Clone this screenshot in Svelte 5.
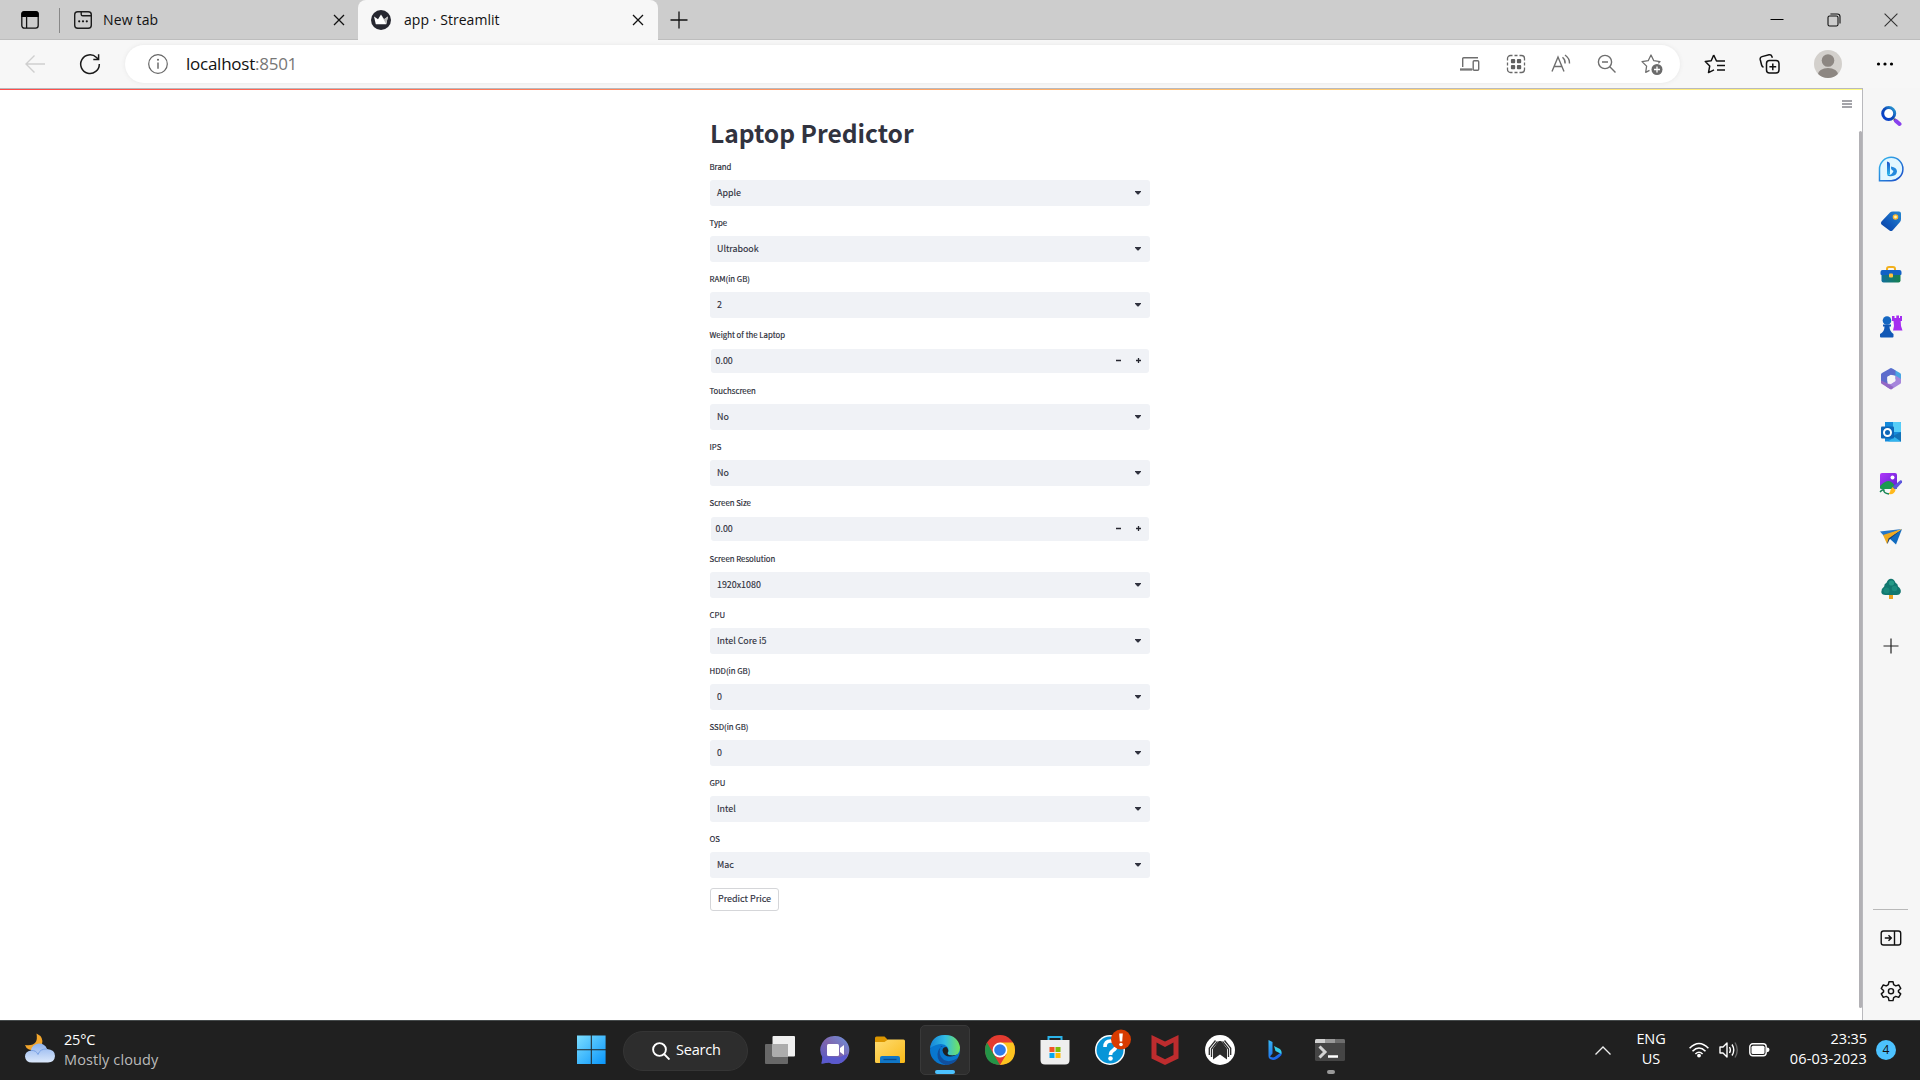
<script>
  const fields = [
    { label: 'Brand', value: 'Apple' },
    { label: 'Type', value: 'Ultrabook' },
    { label: 'RAM(in GB)', value: '2' },
    { label: 'Weight of the Laptop', value: '0.00', number: true },
    { label: 'Touchscreen', value: 'No' },
    { label: 'IPS', value: 'No' },
    { label: 'Screen Size', value: '0.00', number: true },
    { label: 'Screen Resolution', value: '1920x1080' },
    { label: 'CPU', value: 'Intel Core i5' },
    { label: 'HDD(in GB)', value: '0' },
    { label: 'SSD(in GB)', value: '0' },
    { label: 'GPU', value: 'Intel' },
    { label: 'OS', value: 'Mac' }
  ];
</script>

<div class="screen">
  <!-- tab strip -->
  <header class="tabs">
    <div class="tabmenu">
      <svg width="20" height="20" viewBox="0 0 20 20"><rect x="1.8" y="1.8" width="16.4" height="16.4" rx="2.6" fill="none" stroke="#111" stroke-width="1.3" /><path d="M1.3 7V4a3 3 0 0 1 3-3h11.4a3 3 0 0 1 3 3v3z" fill="#000" /><path d="M6.6 6v12" stroke="#111" stroke-width="1.3" /></svg>
    </div>
    <i class="sep"></i>
    <div class="tab idle">
      <svg width="20" height="20" viewBox="0 0 20 20"><g fill="none" stroke="#1c1c1c" stroke-width="1.4"><rect x="1.7" y="1.7" width="16.6" height="16.6" rx="3" /><path d="M8.2 2v2.2q0 1.6 1.6 1.6H18" /></g><g fill="#111"><circle cx="6.2" cy="11.3" r="1.1" /><circle cx="10" cy="11.3" r="1.1" /><circle cx="13.8" cy="11.3" r="1.1" /></g></svg>
      <span class="t1">New tab</span>
      <svg class="x" width="12" height="12" viewBox="0 0 12 12"><path d="M1 1l10 10M11 1L1 11" stroke="#111" stroke-width="1.3" /></svg>
    </div>
    <div class="tab active">
      <svg width="20" height="20" viewBox="0 0 20 20"><circle cx="10" cy="10" r="10" fill="#262730" /><path d="M3 6.5l4 2.7L10 4.5l3 4.7 4-2.7-1.8 7.8H4.8z" fill="#fff" /><path d="M10 4.5l3 4.7 4-2.7-1.8 7.8z" fill="#bbb" /></svg>
      <span class="t2">app · Streamlit</span>
      <svg class="x" width="12" height="12" viewBox="0 0 12 12"><path d="M1 1l10 10M11 1L1 11" stroke="#111" stroke-width="1.3" /></svg>
    </div>
    <div class="plus"><svg width="18" height="18" viewBox="0 0 18 18"><path d="M9 .5v17M.5 9h17" stroke="#111" stroke-width="1.3" /></svg></div>
    <div class="grow"></div>
    <div class="win"><svg width="14" height="14" viewBox="0 0 14 14"><path d="M.5 6.500h13" stroke="#000" /></svg></div>
    <div class="win"><svg width="14" height="14" viewBox="0 0 14 14"><g fill="none" stroke="#111" stroke-width="1.1"><rect x="1" y="3" width="10" height="10" rx="1.6" /><path d="M3.4 1h7A2.7 2.7 0 0 1 13 3.6v7" /></g></svg></div>
    <div class="win"><svg width="14" height="14" viewBox="0 0 14 14"><path d="M.6.6l12.8 12.8M13.4.6L.6 13.4" stroke="#333" stroke-width="1.1" /></svg></div>
  </header>

  <!-- toolbar -->
  <div class="toolbar">
    <div class="nav back"><svg width="20" height="20" viewBox="0 0 20 20"><path d="M20 10H1M9.5 1.5L1 10l8.500 8.500" fill="none" stroke="#cfcfcf" stroke-width="1.4" /></svg></div>
    <div class="nav"><svg width="22" height="22" viewBox="0 0 22 22"><path d="M20.300 11A9.300 9.300 0 1 1 17.500 4.500L19.500 6.300M19.600 1.200v5.200h-5.300" fill="none" stroke="#1a1a1a" stroke-width="1.5" /></svg></div>
    <div class="address">
      <svg width="20" height="20" viewBox="0 0 20 20"><circle cx="10" cy="10" r="9.300" fill="none" stroke="#666" stroke-width="1.2" /><path d="M10 8.500v6.300" stroke="#555" stroke-width="1.3" /><circle cx="10" cy="5.800" r=".95" fill="#555" /></svg>
      <span class="url">localhost<b>:8501</b></span>
      <div class="grow"></div>
      <div class="act"><svg width="22" height="20" viewBox="0 0 22 20"><g fill="none" stroke="#6e6e6e" stroke-width="1.4"><path d="M3.700 13V4.700q0-1 1-1H19M1 15.500h12.500" /><rect x="14.200" y="6.700" width="5.500" height="9.500" rx="1" /></g><path d="M1 14.500h12v2H1z" fill="#777" /></svg></div>
      <div class="act"><svg width="20" height="20" viewBox="0 0 20 20"><g fill="none" stroke="#686868" stroke-width="1.300"><path d="M1.500 6.500v-2a3 3 0 0 1 3-3h2M8.500 1.500h3M13.500 1.500h2a3 3 0 0 1 3 3v2M18.500 8.500v3M18.500 13.500v2a3 3 0 0 1-3 3h-2M11.500 18.500h-3M6.500 18.500h-2a3 3 0 0 1-3-3v-2M1.500 11.500v-3" /></g><g fill="#606060"><rect x="4.900" y="4.900" width="4.300" height="4.300" rx="1" /><rect x="10.900" y="4.900" width="4.300" height="4.300" rx="1" /><rect x="4.900" y="10.900" width="4.300" height="4.300" rx="1" /><rect x="10.900" y="10.900" width="4.300" height="4.300" rx="1" /></g></svg></div>
      <div class="act"><svg width="20" height="20" viewBox="0 0 20 20"><path d="M1 17.500L7 3l6 14.500M3.100 12.500h7.800M11.500 3.200q3 2.500 2.600 6.300M14 1q4.800 3.500 4.500 8.500" fill="none" stroke="#6e6e6e" stroke-width="1.400" /></svg></div>
      <div class="act"><svg width="20" height="20" viewBox="0 0 20 20"><g fill="none" stroke="#6e6e6e" stroke-width="1.400"><circle cx="8" cy="8" r="6.600" /><path d="M12.800 12.800l5.700 5.700M5 8h6" /></g></svg></div>
      <div class="act"><svg width="22" height="22" viewBox="0 0 22 22"><path d="M8.500 17.300L4.700 19.300l.9-6.200L1 8.600l6.200-.9L10 2l2.800 5.700 6.200.9-1.700 1.700" fill="none" stroke="#6e6e6e" stroke-width="1.300" stroke-linejoin="round" /><circle cx="16" cy="16.500" r="5.500" fill="#6b6b6b" /><path d="M16 13.500v6M13 16.500h6" stroke="#fff" stroke-width="1.300" /></svg></div>
    </div>
    <div class="tool first"><svg width="22" height="22" viewBox="0 0 22 22"><path d="M9.700 2L7.200 7.800 1.300 8.600l4.400 4.500L4.500 19.600 10 16.800M9.700 2l2.800 6H21M13 12.500h8M13 17h8" fill="none" stroke="#111" stroke-width="1.500" stroke-linejoin="round" /></svg></div>
    <div class="tool"><svg width="22" height="22" viewBox="0 0 22 22"><g fill="none" stroke="#111" stroke-width="1.500"><rect x="7.500" y="7.500" width="12.500" height="12.500" rx="3" /><path d="M13.800 10.500v6.700M10.400 13.800h6.800M4.500 14.200Q3 13.800 2.600 12L1.200 6.500Q.8 4.300 3 3.600L10 1.800q2.200-.5 2.900 1.600l.5 1.400" /></g></svg></div>
    <div class="tool wide"><svg width="28" height="28" viewBox="0 0 28 28"><defs><clipPath id="av"><circle cx="14" cy="14" r="14" /></clipPath></defs><g clip-path="url(#av)"><rect width="28" height="28" fill="#d3d0cc" /><circle cx="14" cy="10.500" r="6.300" fill="#8d8782" /><ellipse cx="14" cy="25" rx="10.300" ry="7" fill="#8d8782" /></g></svg></div>
    <div class="tool"><svg width="18" height="6" viewBox="0 0 18 6"><circle cx="2.500" cy="3" r="1.600" /><circle cx="9" cy="3" r="1.600" /><circle cx="15.500" cy="3" r="1.600" /></svg></div>
  </div>

  <div class="body">
    <main>
      <div class="rainbow"></div>
      <svg class="menu" width="10" height="8" viewBox="0 0 10 8"><path d="M0 1h10M0 4h10M0 7h10" stroke="#4a4b55" stroke-width="1.200" /></svg>
      <i class="scroll"></i>
      <section class="form">
        <h1>Laptop Predictor</h1>
        {#each fields as f}
          <div class="field">
            <span class="label">{f.label}</span>
            {#if f.number}
              <div class="box number"><span>{f.value}</span>
                <svg width="26" height="8" viewBox="0 0 26 8"><path d="M0 3.500h5M20 3.500h5M22.500 1v5" stroke="#262730" stroke-width="1.300" /></svg>
              </div>
            {:else}
              <div class="box"><span>{f.value}</span>
                <svg width="6" height="4" viewBox="0 0 6 4"><path d="M0 0h6v.8L3.500 3.500h-1L0 .8z" fill="#31333f" /></svg>
              </div>
            {/if}
          </div>
        {/each}
        <button>Predict Price</button>
      </section>
    </main>

    <aside>
      <div class="app"><svg width="22" height="22" viewBox="0 0 22 22"><defs><linearGradient id="s1" x1="0" y1="1" x2="1" y2="0"><stop stop-color="#0a3fd0" /><stop offset=".5" stop-color="#0d48b8" /><stop offset="1" stop-color="#2da0d4" /></linearGradient></defs><circle cx="8.700" cy="8.500" r="6" fill="#fff" stroke="url(#s1)" stroke-width="3" /><path d="M14 14l2 2" stroke="#555" stroke-width="2.500" /><path d="M16 16l3.500 3" stroke="#8941ed" stroke-width="4" stroke-linecap="round" /></svg></div>
      <div class="app"><svg width="26" height="26" viewBox="0 0 26 26"><defs><linearGradient id="b1" x2="1" y2="1"><stop stop-color="#36bbef" /><stop offset="1" stop-color="#1747c6" /></linearGradient><linearGradient id="b2" x2="0" y2="1"><stop stop-color="#1c50c8" /><stop offset="1" stop-color="#2ec2ee" /></linearGradient></defs><path d="M1.500 24.700V13A11.700 11.700 0 1 1 13 24.700z" fill="#e2f7ff" stroke="url(#b1)" stroke-width="1.500" /><path d="M9 5.500q3 .5 3 3v9l-1 2.500q-2 0-2-2.500z" fill="url(#b2)" /><path d="M13 10.500q6 1 6 5-.5 4.500-6 4.700-2.500.3-3.500-1 4.500 0 6-4.200l-1.500-1q-1.300-1-1-3.500z" fill="#2389dd" /></svg></div>
      <div class="app"><svg width="22" height="22" viewBox="0 0 22 22"><defs><linearGradient id="tg" x1="1" x2="0" y2="1"><stop stop-color="#2789d0" /><stop offset=".6" stop-color="#1058bb" /><stop offset="1" stop-color="#0b3f9d" /></linearGradient></defs><path d="M1.500 11.500L10 2.500q1-1 3-1h6q2 0 2 2V9q0 2-1 3l-7.500 8.500q-1.500 1-3 0L1.500 14.500q-1.300-1.500 0-3z" fill="url(#tg)" /><circle cx="15.500" cy="7" r="2.100" fill="#fff6b0" stroke="#ffb72c" stroke-width="1.400" /></svg></div>
      <div class="app"><svg width="22" height="22" viewBox="0 0 22 22"><defs><linearGradient id="tb" x2="1"><stop stop-color="#116f9c" /><stop offset="1" stop-color="#16804e" /></linearGradient></defs><path d="M7 8V6q0-2 2-2h4q2 0 2 2v2" fill="none" stroke="#f2b01d" stroke-width="2" /><path d="M1.500 10h19v7.500q0 2-2 2h-15q-2 0-2-2z" fill="url(#tb)" /><path d="M.5 9q0-2 2-2h17q2 0 2 2v2q0 1-1 1h-19q-1 0-1-1z" fill="#1261c5" /><rect x="9" y="10.500" width="4" height="4" rx="1" fill="#ffc23c" /></svg></div>
      <div class="app"><svg width="24" height="24" viewBox="0 0 24 24"><path d="M13 2h2.500v2h1.800V1.500H20v2.500h1V2h2v5h-1.300l.3 5 1.500 4.500H14l1-4.500-.5-5H13z" fill="#a52df0" /><circle cx="8" cy="6.500" r="4.300" fill="#1567c2" /><path d="M4 10.500h8v2H10.500Q10.500 17 14.500 20v2.500q0 1-1 1H2q-1 0-1-1V20q4.500-2 4.500-7.500H4z" fill="#1158b6" /></svg></div>
      <div class="app"><svg width="22" height="24" viewBox="0 0 22 24"><path d="M10 1.500q1-.6 2 0L20 6q1 .5 1 1.500v7L15.500 12V9L8 4z" fill="#4aa6e4" /><path d="M10 1.500q1-.6 2 0l3.500 2v5L11 8l-3.500 2v9L2 16q-1-.5-1-1.500v-7Q1 6.500 2 6z" fill="#5d6ccc" /><path d="M15.500 8.500L21 12v3.500q0 1-1 1.500l-8 5q-1 .6-2 0l-4-2.500v-3l5 .500 4.500-3z" fill="#a686dc" /><path d="M1 13.500L6.500 16l7 4-1.500 2q-1 .6-2 0l-8-5q-1-.5-1-1.500z" fill="#9367c5" /><path d="M11 7.800l3.700 2v4.400l-3.700 2-3.700-2V9.800z" fill="#f6f6f6" /></svg></div>
      <div class="app"><svg width="22" height="22" viewBox="0 0 22 22"><path d="M5 1h15q1 0 1 1v18.500H5z" fill="#148adb" /><path d="M13 1h7q1 0 1 1v9h-8z" fill="#56cdf8" /><path d="M8 20.500l13-9v9z" fill="#32b5ee" /><path d="M13 15l8 5.500V11z" fill="#1272b8" /><rect x="1" y="5.500" width="13" height="12" rx="1" fill="#0d66b8" /><circle cx="7.500" cy="11.500" r="3.500" fill="none" stroke="#fff" stroke-width="2" /></svg></div>
      <div class="app"><svg width="24" height="24" viewBox="0 0 24 24"><defs><linearGradient id="im" x2="1" y2="1"><stop stop-color="#b136fa" /><stop offset="1" stop-color="#5d20d2" /></linearGradient></defs><rect x="1" y="1" width="17" height="16" rx="2" fill="url(#im)" /><circle cx="13.500" cy="5.500" r="2" fill="#fff" /><path d="M1 14q5-5 8.500-5 4 0 8.500 8H3q-2 0-2-1z" fill="#1c9a50" /><path d="M13.500 15l7.800-6.700q2.500-.3 1.700 2.200l-6.500 7z" fill="#5c55dd" /><path d="M13.500 15l3 3q-1 5-7 4 2-1.500 2-4z" fill="#ffb91c" /><path d="M1 20q3-3 4-2-1 3 5 4" fill="none" stroke="#168655" stroke-width="1.500" /></svg></div>
      <div class="app"><svg width="24" height="20" viewBox="0 0 24 20"><path d="M1 4.500L23 2 5 9z" fill="#2777c9" /><path d="M10 11L23 2 17 17.500z" fill="#106bbf" /><path d="M7 12L22 3 10.500 12.500 8.500 17z" fill="#173f72" /><path d="M4 8L23 2 9.500 11.500 8 17z" fill="#efaa20" /></svg></div>
      <div class="app"><svg width="22" height="22" viewBox="0 0 22 22"><rect x="9" y="16" width="4" height="5" rx=".5" fill="#e8a11d" /><path d="M11 .8q3 0 4.500 4Q18 6 18 8.500q3.500 2.500 2.700 6Q19.500 17.500 16 17H5.500Q1.500 17 1.300 14q0-3.500 2.900-5.500Q4 6 6.500 4.800 8 .8 11 .8z" fill="#12776f" /><circle cx="11.500" cy="5" r="2.600" fill="#259a87" /><circle cx="14.500" cy="10.500" r="2.800" fill="#1c8c7e" /><circle cx="6.500" cy="12.500" r="3" fill="#1a887b" /></svg></div>
      <div class="app add"><svg width="16" height="16" viewBox="0 0 16 16"><path d="M8 .5v15M.5 8h15" stroke="#222" stroke-width="1.200" /></svg></div>
      <div class="grow"></div>
      <i class="rule"></i>
      <div class="app"><svg width="22" height="18" viewBox="0 0 22 18"><g fill="none" stroke="#111" stroke-width="1.400"><rect x="1.200" y="2" width="19.500" height="14" rx="2.300" /><path d="M14.500 2v14M4.800 9h6.500M8.500 6.200L11.300 9l-2.800 2.800" /></g></svg></div>
      <div class="app"><svg width="22" height="22" viewBox="0 0 24 24"><path d="M9.800 1.800h4.400l.7 3.300 2.300 1.300 3.200-1 2.200 3.800L20.100 11.500v1.500l2.500 2.100-2.200 3.800-3.200-1-2.300 1.300-.7 3.300H9.800l-.7-3.300-2.300-1.300-3.200 1-2.200-3.800 2.500-2.100v-1.500L1.400 9.200l2.200-3.800 3.200 1 2.300-1.300z" fill="none" stroke="#111" stroke-width="1.600" stroke-linejoin="round" /><circle cx="12" cy="12.200" r="2.800" fill="none" stroke="#111" stroke-width="1.600" /></svg></div>
    </aside>
  </div>

  <!-- taskbar -->
  <footer>
    <div class="weather">
      <svg width="32" height="32" viewBox="0 0 32 32"><defs><linearGradient id="cl" x2="0" y2="1"><stop stop-color="#8eb2ee" /><stop offset="1" stop-color="#dbe8fb" /></linearGradient></defs><path d="M12.500 1.500Q20 5 18 12.500 14 20 5 17.500 2 16.500 1 13q14 2 11.500-11.500z" fill="#f3a62c" /><path d="M8 30.500q-6.500 0-7-6 0-5 6-6Q8 12 15 11.500q6 0 8 5.500 8 .5 8 7-.5 6.500-7 6.500z" fill="url(#cl)" /><path d="M7 18.500q5-.5 7 4 2-6 9-5.500" fill="none" stroke="#7ba2e5" stroke-width="1" /></svg>
      <div class="wt"><span>25°C</span><span class="dim">Mostly cloudy</span></div>
    </div>
    <div class="tasks">
      <div class="task"><svg width="30" height="30" viewBox="0 0 30 30"><defs><linearGradient id="w" gradientUnits="userSpaceOnUse" x1="0" y1="0" x2="29" y2="29"><stop stop-color="#7fe0ff" /><stop offset="1" stop-color="#0a96fb" /></linearGradient></defs><path d="M1 .5h13.800v13.800H1zM15.800.5h13.800v13.800H15.800zM1 15.300h13.800v13.800H1zM15.800 15.300h13.800v13.800H15.800z" fill="url(#w)" /></svg></div>
      <div class="search"><svg width="18" height="18" viewBox="0 0 18 18"><g fill="none" stroke="#fff" stroke-width="1.900"><circle cx="7.500" cy="7.500" r="6.400" /><path d="M12 12l5.500 5.500" /></g></svg><span>Search</span></div>
      <div class="task"><svg width="30" height="28" viewBox="0 0 30 28"><rect x="0" y="8" width="23" height="20" rx="1" fill="#686868" /><rect x="7.500" y="0" width="22.500" height="20.500" rx="1" fill="#f0f0f0" /><rect x="7.500" y="8" width="15.500" height="12.500" fill="#adadad" /></svg></div>
      <div class="task"><svg width="30" height="30" viewBox="0 0 30 30"><defs><linearGradient id="ch" x1="1" x2="0" y2="1"><stop stop-color="#6b93dc" /><stop offset=".5" stop-color="#8065ad" /><stop offset="1" stop-color="#5059c9" /></linearGradient></defs><path d="M15 1a14 14 0 1 1-6 26.500l-7.500 1.200 1.200-6A14 14 0 0 1 15 1z" fill="url(#ch)" /><path d="M2.500 21Q12 23 20 22l8-3Q25 29 15 29q-4 0-6-1.500l-7.500 1z" fill="#5a59cd" /><rect x="7" y="9" width="12" height="12" rx="1.500" fill="#fff" /><path d="M20 13l4-3v10l-4-3z" fill="#fff" /></svg></div>
      <div class="task"><svg width="30" height="28" viewBox="0 0 30 28"><defs><linearGradient id="fo" x2="1" y2="1"><stop stop-color="#ffdc72" /><stop offset="1" stop-color="#f9b917" /></linearGradient></defs><path d="M0 9V2q0-1.500 1.500-1.500h8L13 4v7z" fill="#dc9600" /><path d="M0 6h9.500L13 3.500h15.500Q30 3.500 30 5v20.500q0 1.500-1.500 1.500h-27Q0 27 0 25.500z" fill="url(#fo)" /><path d="M5 27v-5q0-2 2-2h16q2 0 2 2v5z" fill="#1177c7" /><path d="M8.500 23.500h13" stroke="#084a8d" stroke-width="1.300" /></svg></div>
      <div class="task"><div class="tile"><svg width="30" height="30" viewBox="0 0 30 30"><defs><linearGradient id="eg" x2="1" y2="0"><stop stop-color="#1685d8" /><stop offset=".5" stop-color="#31bce5" /><stop offset="1" stop-color="#74e45a" /></linearGradient></defs><circle cx="15" cy="15" r="15" fill="#0877cf" /><path d="M0 13Q2 0 15 0t15 12.500q0 8-7.500 8-5 0-5-2.500 2-2.500 0-6Q12 5.500 0 13z" fill="url(#eg)" /><path d="M11 11q-4 9 3 14 6 3 14-2-3.500 7-12.500 7Q7 27 7.500 19 8 13 13 11z" fill="#114f9d" /><path d="M16.500 12q-4 0-4 3.500 1 6 7.500 6 5 0 8-3-2 2-5.500 2-5 0-5-2.500 2-2.500-1-6z" fill="#202020" /></svg></div></div>
      <div class="task"><svg width="30" height="30" viewBox="0 0 30 30"><circle cx="15" cy="15" r="15" fill="#e33b30" /><path d="M2 7.500L8.500 19l6.500 11Q0 29 0 15q0-4.500 2-7.500z" fill="#249447" /><path d="M15 7.500h13q2 3 2 7.500 0 14-15 15l6.500-11z" fill="#fcc420" /><circle cx="15" cy="15" r="7.400" fill="#fff" /><circle cx="15" cy="15" r="5.800" fill="#2d7bea" /></svg></div>
      <div class="task"><svg width="30" height="30" viewBox="0 0 30 30"><path d="M8.500 6V2h13v4" fill="none" stroke="#2bb3e9" stroke-width="2" /><path d="M.5 5h29v20q0 4.500-4.500 4.500H5Q.5 29.500.5 25z" fill="#eee" /><path d="M9.500 12h5v5h-5z" fill="#f35325" /><path d="M15.500 12h5v5h-5z" fill="#81bc06" /><path d="M9.500 18h5v5h-5z" fill="#05a6f0" /><path d="M15.500 18h5v5h-5z" fill="#ffba08" /></svg></div>
      <div class="task"><svg class="help" width="42" height="42" viewBox="0 0 42 42"><circle cx="21" cy="21" r="15" fill="#fff" /><circle cx="21" cy="21" r="13.500" fill="#0795d8" /><path d="M16 18q0-6 5.500-6t5.500 5q0 2.500-3 4.500-2.500 1.500-2.500 4.500" fill="none" stroke="#fff" stroke-width="3.600" /><circle cx="21.500" cy="29.500" r="2.300" fill="#fff" /><circle cx="32" cy="10.500" r="10" fill="#d83b01" /><path d="M30.200 4.500h3.600l-.6 8h-2.400z" fill="#fff" /><circle cx="32" cy="15.500" r="1.800" fill="#fff" /></svg></div>
      <div class="task"><svg width="28" height="30" viewBox="0 0 28 30"><path d="M.5 0L14 6.500 27.500 0v23.500L14 30 .5 23.500z" fill="#bd2c2e" /><path d="M5.500 7.500L14 12l8.500-4.500V20L14 24.300 5.500 20z" fill="#202020" /></svg></div>
      <div class="task"><svg width="30" height="30" viewBox="0 0 30 30"><circle cx="15" cy="15" r="15" fill="#fff" /><path d="M8 24.500V13.500L13.200 6h3.600L22 13.500v11L15 19.500z" fill="#2c2c2c" /><path d="M13.500 5L7 13.500V23M16.500 5L23 13.500V23" fill="none" stroke="#fff" stroke-width="1.600" /><path d="M10.500 5.500L4.300 13.200V20M19.500 5.500l6.200 7.700V20M12.500 6.500L6.500 14v8M17.500 6.500l6 7.500v8" fill="none" stroke="#2c2c2c" stroke-width="1.300" /></svg></div>
      <div class="task"><svg width="14" height="20" viewBox="0 0 14 20"><defs><linearGradient id="bi" y2="1" x2=".5"><stop stop-color="#37baf4" /><stop offset="1" stop-color="#1b62eb" /></linearGradient></defs><path d="M.5 0l4 2v11.500l-2.500 3q4 2 6-.5l5.500-4v3Q9 20 5 20q-4.500-.5-4.500-4z" fill="url(#bi)" /><path d="M6 6l6 3q2 1.500 1.500 5L7.500 11z" fill="#36cde9" /></svg></div>
      <div class="task term"><svg width="30" height="22" viewBox="0 0 30 22"><rect width="30" height="22" rx="1.500" fill="#454545" /><path d="M0 4V1.500Q0 0 1.500 0H10v4z" fill="#d0d0d0" /><path d="M10 0h10v4H10z" fill="#999" /><path d="M20 0h8.500Q30 0 30 1.500V4H20z" fill="#6d6d6d" /><path d="M4.500 7.500L10 13l-5.500 5.500" fill="none" stroke="#d4d4d4" stroke-width="3" /><path d="M13 17.500h10" stroke="#fff" stroke-width="2.500" /></svg></div>
    </div>
    <div class="tray">
      <svg width="16" height="9" viewBox="0 0 16 9"><path d="M.5 8.500L8 1l7.500 7.500" fill="none" stroke="#eee" stroke-width="1.300" /></svg>
      <div class="lang"><span>ENG</span><span>US</span></div>
      <svg class="wifi" width="20" height="16" viewBox="0 0 20 16"><g fill="none" stroke="#fff" stroke-width="1.600"><path d="M.6 6.200q9.400-9.500 18.800 0M3.500 9.200q6.500-6.500 13 0M6.400 12q3.600-3.500 7.200 0" /></g><circle cx="10" cy="13.600" r="1.900" fill="#fff" /></svg>
      <svg class="snd" width="21" height="18" viewBox="0 0 21 18"><g fill="none" stroke="#fff" stroke-width="1.400" stroke-linejoin="round"><path d="M1 6h3l4-4v14l-4-4H1zM10.500 6q1.800 3 0 6M13 3.500q3.500 5.500 0 11" /><path d="M16 1.500q4.500 7.500 0 15" stroke="#666" /></g></svg>
      <svg class="bat" width="21" height="14" viewBox="0 0 21 14"><rect x=".8" y=".8" width="16.400" height="12" rx="3" fill="none" stroke="#fff" stroke-width="1.400" /><rect x="2.500" y="2.700" width="13" height="8.300" rx="1.500" fill="#fff" /><path d="M18 4.500q2.500 0 2.500 2.300T18 9.200z" fill="#fff" /></svg>
      <div class="clock"><span>23:35</span><span class="date">06-03-2023</span></div>
      <div class="badge">4</div>
    </div>
  </footer>
</div>

<style>
  :global(body) { margin: 0; overflow: hidden; background: #fff; }
  * { box-sizing: border-box; }
  svg { display: block; flex: none; }
  .screen { width: 1920px; height: 1080px; display: flex; flex-direction: column; font-family: "Open Sans", "Noto Sans", sans-serif; color: #111; overflow: hidden; }
  .grow { flex: 1; }
  .tabs { height: 40px; flex: none; display: flex; background: #cdcdcd; box-shadow: inset 0 -1px #bdbdbd; }
  .tabmenu { width: 59px; display: flex; align-items: center; justify-content: center; padding-left: 1px; }
  .sep { width: 1px; height: 25px; margin-top: 8px; background: #888; }
  .tab { display: flex; align-items: center; font-size: 14px; white-space: nowrap; }
  .tab span { padding-bottom: 2px; }
  .idle { width: 298px; padding: 0 13px; }
  .active { width: 300px; background: #f7f7f7; padding: 0 14px 0 13px; border-radius: 8px 8px 0 0; }
  .idle span { margin-left: 10px; }
  .active span { margin-left: 13px; }
  .t1 { letter-spacing: .15px; }
  .t2 { letter-spacing: .05px; }
  .x { margin-left: auto; }
  .plus { width: 42px; display: grid; place-items: center; }
  .win { width: 57px; display: grid; place-items: center; padding-right: 2px; }
  .toolbar { height: 48px; flex: none; display: flex; background: #f7f7f7; align-items: center; }
  .nav { width: 55px; display: grid; place-items: center; }
  .back { width: 70px; }
  .nav:nth-child(2) { width: 40px; margin-right: 15px; }
  .address { width: 1555px; height: 38px; background: #fff; border-radius: 19px; box-shadow: 0 0 4px #e6e6e6; display: flex; align-items: center; padding: 0 5px 0 23px; }
  .url { font-size: 17px; margin-left: 18px; letter-spacing: -.25px; padding-bottom: 2px; }
  .url b { font-weight: 400; color: #777; }
  .act { width: 45.500px; display: grid; place-items: center; }
  .tool { width: 56px; display: grid; place-items: center; }
  .first { width: 55px; margin-left: 7px; }
  .wide { width: 59px; }
  .body { flex: 1; display: flex; min-height: 0; }
  main { flex: 1; position: relative; border-top: 1px solid #b9b9bd; display: flex; justify-content: center; }
  .rainbow { position: absolute; top: 0; left: 0; right: 0; height: 1px; background: linear-gradient(90deg, #ff4b4b, #fffd80); }
  .menu { position: absolute; right: 10px; top: 11px; }
  .scroll { position: absolute; right: 0; top: 42px; width: 3px; height: 877px; background: #b2b1b5; border-radius: 2px; }
  .form { width: 440px; margin-right: 2px; display: flex; flex-direction: column; gap: 11px; align-items: flex-start; font-family: "Noto Sans CJK JP", "Noto Sans", sans-serif; color: #31333f; }
  h1 { margin: 23px 0 -2px; height: 40px; line-height: 40px; font-size: 24.600px; font-weight: 700; flex: none; }
  .field { width: 440px; height: 45px; display: flex; flex-direction: column; gap: 7px; flex: none; }
  .label { height: 12px; line-height: 12px; font-size: 7.800px; color: #262833; -webkit-text-stroke: .15px #262833; margin-left: -.5px; }
  .box { height: 26px; background: #f0f2f6; border-radius: 3px; display: flex; align-items: center; justify-content: space-between; padding: 0 9.500px 0 7px; font-size: 8.900px; line-height: 24px; -webkit-text-stroke: .15px #31333f; }
  .number { height: 24px; margin: 1px; padding: 0 7px 0 4.500px; }
  button { margin-top: -1px; flex: none; width: 69px; height: 23px; background: #fff; border: 1px solid #d5d6d9; border-radius: 3px; padding: 0 0 2px; font: 9px/19px "Noto Sans CJK JP", sans-serif; color: #31333f; -webkit-text-stroke: .15px #31333f; }
  aside { width: 58px; background: #f6f6f6; border-left: 1px solid #b9b9bd; display: flex; flex-direction: column; align-items: center; padding: 2px 2px 3px 0; }
  .app { height: 52.550px; flex: none; display: grid; place-items: center; }
  .add { height: 61px; }
  .rule { width: 35px; height: 1px; background: #b9b9b9; margin-bottom: 2px; }
  footer { height: 60px; flex: none; display: flex; background: #202020; border-top: 1px solid #454a4b; color: #fff; font-size: 14.500px; line-height: 20px; }
  .weather { width: 563.500px; padding-left: 24px; display: flex; align-items: center; gap: 8px; }
  .weather svg { margin-top: -5px; }
  .wt, .lang, .clock { display: flex; flex-direction: column; white-space: nowrap; padding-bottom: 2px; }
  .wt { letter-spacing: -.2px; }
  .dim { color: #bbb; letter-spacing: .12px; }
  .tasks { display: flex; align-items: center; }
  .task { width: 55px; height: 59px; display: grid; place-items: center; padding-bottom: 1px; }
  .search { width: 125px; height: 40px; border-radius: 20px; background: #2d2d2d; border: 1px solid #353535; margin: 0 4.500px; display: flex; align-items: center; padding-left: 28px; gap: 6px; letter-spacing: -.2px; }
  .search span { padding-bottom: 1px; }
  .tile { width: 50px; height: 50px; border: 1px solid #393939; border-radius: 5px; background: #2d2d2d; display: grid; place-items: center; position: relative; }
  .tile::after { content: ""; position: absolute; bottom: 0; left: 14px; width: 20px; height: 4px; border-radius: 2px; background: #4cc2ff; }
  .term { position: relative; }
  .term::after { content: ""; position: absolute; bottom: 6px; left: 24px; width: 8px; height: 4px; border-radius: 2px; background: #999; }
  .tray { flex: 1; display: flex; align-items: center; justify-content: flex-end; padding: 0 24px 1px 0; }
  .lang { width: 40px; margin-left: 20px; align-items: center; letter-spacing: -.1px; }
  .wifi { margin-left: 18px; }
  .snd { margin-left: 10px; }
  .bat { margin-left: 9px; }
  .clock { width: 90px; margin-left: 7px; align-items: flex-end; letter-spacing: -.1px; }
  .date { letter-spacing: .15px; }
  .badge { width: 20px; height: 20px; border-radius: 50%; background: #4cc2ff; color: #111; font-size: 12px; text-align: center; line-height: 20px; margin-left: 9px; }
</style>
